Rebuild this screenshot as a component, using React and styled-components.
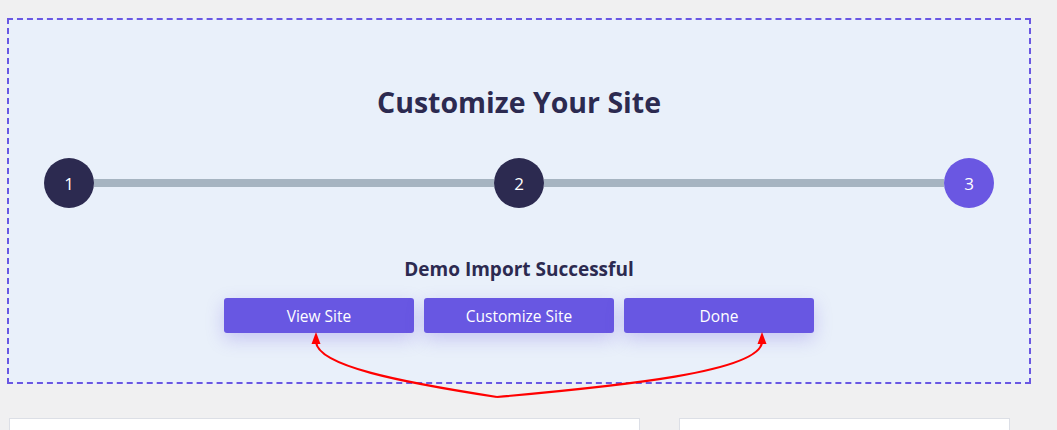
import React from "react";
import styled, { createGlobalStyle } from "styled-components";

const GlobalStyle = createGlobalStyle`
  html, body {
    margin: 0;
    padding: 0;
    background: #f0f0f1;
  }
  body {
    font-family: "Open Sans", "Noto Sans", sans-serif;
  }
`;

const steps = [
  { num: 1, active: false },
  { num: 2, active: false },
  { num: 3, active: true },
];

const buttons = ["View Site", "Customize Site", "Done"];

const App = () => {
  return (
    <Page>
      <GlobalStyle />
      <Wizard>
        <Title>Customize Your Site</Title>
        <Steps>
          {steps.map((step, i) => (
            <React.Fragment key={step.num}>
              {i > 0 && <Line />}
              <Circle $active={step.active}>{step.num}</Circle>
            </React.Fragment>
          ))}
        </Steps>
        <Message>Demo Import Successful</Message>
        <Actions>
          {buttons.map((label) => (
            <ActionButton key={label}>{label}</ActionButton>
          ))}
        </Actions>
      </Wizard>
      <Cards>
        <Card $width="631px" />
        <Card $width="331px" />
      </Cards>
      <Annotation viewBox="0 0 1057 430" width="1057" height="430">
        <path
          d="M497 397 C 400 382, 318 366, 316 342"
          fill="none"
          stroke="#ff0000"
          strokeWidth="2.2"
        />
        <path
          d="M497 397 C 620 386, 760 372, 762 342"
          fill="none"
          stroke="#ff0000"
          strokeWidth="2.2"
        />
        <polygon points="316,332 311.5,344 320.5,344" fill="#ff0000" />
        <polygon points="762,332 757.5,344 766.5,344" fill="#ff0000" />
      </Annotation>
    </Page>
  );
};

export default App;

const Page = styled.div`
  position: relative;
  width: 1057px;
  height: 430px;
  overflow: hidden;
  padding: 18px 0 0 7px;
  box-sizing: border-box;
`;

const Wizard = styled.div`
  width: 1024px;
  height: 366px;
  box-sizing: border-box;
  border: 2px dashed #6a57e2;
  background: #e9f0fa;
  padding: 67px 35px 0;
  display: flex;
  flex-direction: column;
  align-items: center;
`;

const Title = styled.h2`
  margin: 0;
  font-family: "Open Sans", sans-serif;
  font-size: 28.5px;
  line-height: 30px;
  font-weight: 700;
  color: #2c2a50;
`;

const Steps = styled.div`
  width: 100%;
  margin-top: 41px;
  display: flex;
  align-items: center;
`;

const Line = styled.div`
  flex: 1;
  height: 8px;
  background: #a6b4c1;
`;

const Circle = styled.div`
  width: 50px;
  height: 50px;
  flex-shrink: 0;
  border-radius: 50%;
  background: ${(p) => (p.$active ? "#6a57e2" : "#2c2a50")};
  color: #ffffff;
  font-family: "Open Sans", sans-serif;
  font-size: 17px;
  display: flex;
  align-items: center;
  justify-content: center;
`;

const Message = styled.h3`
  margin: 50px 0 0;
  font-family: "Open Sans", sans-serif;
  font-size: 19px;
  line-height: 22px;
  font-weight: 700;
  color: #2c2a50;
`;

const Actions = styled.div`
  margin-top: 18px;
  display: flex;
  gap: 10px;
`;

const ActionButton = styled.button`
  width: 190px;
  height: 35px;
  border: none;
  border-radius: 3px;
  background: #6857e2;
  color: #ffffff;
  font-family: "Open Sans", sans-serif;
  font-size: 15.5px;
  cursor: pointer;
  box-shadow: 0 6px 18px rgba(106, 87, 226, 0.28);
`;

const Cards = styled.div`
  margin-top: 34px;
  display: flex;
  gap: 39px;
  padding-left: 2px;
`;

const Card = styled.div`
  width: ${(p) => p.$width};
  height: 40px;
  background: #ffffff;
  border: 1px solid #dcdfe6;
  box-sizing: border-box;
`;

const Annotation = styled.svg`
  position: absolute;
  left: 0;
  top: 0;
  pointer-events: none;
`;
